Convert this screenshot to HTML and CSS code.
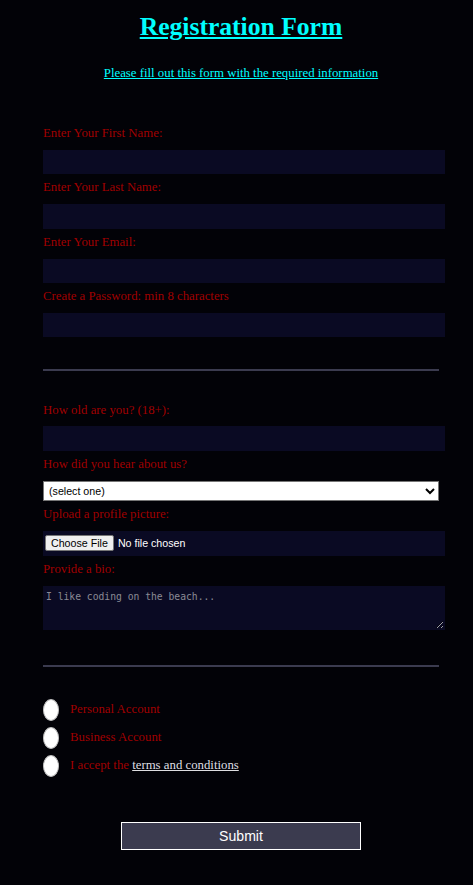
FILE: index.html
```html
<!DOCTYPE html>
<html lang="en">
<head>
<meta charset="utf-8">
<title>Registration Form</title>
<link rel="stylesheet" href="styles.css">
</head>
<body>
<main class="page">
  <h1 class="title">Registration Form</h1>
  <p class="subtitle">Please fill out this form with the required information</p>
  <form class="form" onsubmit="return false">
    <fieldset class="group group-first">
      <label class="field"><span class="field-text">Enter Your First Name:</span><input class="text-input" type="text"></label>
      <label class="field"><span class="field-text">Enter Your Last Name:</span><input class="text-input" type="text"></label>
      <label class="field"><span class="field-text">Enter Your Email:</span><input class="text-input" type="email"></label>
      <label class="field"><span class="field-text">Create a Password: min 8 characters</span><input class="text-input" type="password"></label>
    </fieldset>
    <fieldset class="group group-second">
      <label class="field"><span class="field-text">How old are you? (18+):</span><input class="text-input" type="number"></label>
      <label class="field"><span class="field-text">How did you hear about us?</span><select class="select-input">
        <option>(select one)</option>
        <option>freeCodeCamp News</option>
        <option>freeCodeCamp YouTube Channel</option>
        <option>freeCodeCamp Forum</option>
        <option>Other</option>
      </select></label>
      <label class="field"><span class="field-text">Upload a profile picture:</span><input class="file-input" type="file"></label>
      <label class="field"><span class="field-text">Provide a bio:</span><textarea class="bio-input" placeholder="I like coding on the beach..."></textarea></label>
    </fieldset>
    <fieldset class="group group-third">
      <label class="choice"><input class="round" type="radio" name="account"><span>Personal Account</span></label>
      <label class="choice"><input class="round" type="radio" name="account"><span>Business Account</span></label>
      <label class="choice"><input class="round" type="checkbox"><span>I accept the <a class="terms" href="#">terms and conditions</a></span></label>
    </fieldset>
    <input class="submit" type="submit" value="Submit">
  </form>
</main>
</body>
</html>
```

FILE: styles.css
```css
html, body {
  margin: 0;
  padding: 0;
}

body {
  background-color: #020207;
  font-family: "Liberation Serif", "Times New Roman", serif;
  font-size: 12.8px;
  line-height: 15px;
  min-height: 885px;
}

.page {
  width: 396px;
  margin: 0 0 0 43px;
}

.title {
  margin: 11.8px 0 0;
  font-size: 25.6px;
  line-height: 30px;
  font-weight: bold;
  color: #00ffff;
  text-decoration: underline;
  text-align: center;
}

.subtitle {
  margin: 24.6px 0 0;
  font-size: 12.8px;
  line-height: 15px;
  color: #00ffff;
  text-decoration: underline;
  text-align: center;
}

.form {
  margin: 13.2px 0 0;
  padding: 0 0 20px;
}

.group {
  margin: 0;
  padding: 31.6px 0;
  border: none;
  min-width: 0;
}

.group-first,
.group-second {
  border-bottom: 2.4px solid #3b3b4f;
}

.group-second {
  padding-bottom: 35.6px;
}

.field {
  display: block;
  color: #a00000;
}

.field + .field {
  margin-top: 6.03px;
}

.field-text {
  display: block;
  height: 15px;
}

.text-input,
.file-input,
.bio-input {
  display: block;
  box-sizing: border-box;
  width: 402px;
  margin: 8.8px 0 0;
  background-color: #0a0a23;
  border: 1px solid #0a0a23;
  color: #ffffff;
  outline: none;
}

.text-input {
  height: 24.5px;
  padding: 1px 2px;
}

.select-input {
  display: block;
  box-sizing: border-box;
  width: 396px;
  height: 20px;
  margin: 9.3px 0 0;
  font-family: Arial, "Liberation Sans", sans-serif;
  font-size: 10.67px;
  color: #000000;
  background-color: #ffffff;
  border: 1px solid #767676;
  border-radius: 0;
  padding: 0 1px;
}

.file-input {
  height: 25px;
  padding: 2px 1px;
  font-family: Arial, "Liberation Sans", sans-serif;
  font-size: 10.67px;
  line-height: 19px;
}

.file-input::file-selector-button {
  font-family: Arial, "Liberation Sans", sans-serif;
  font-size: 10.67px;
  height: 16px;
  padding: 0 5px;
  margin: 0 4px 0 0;
  background-color: #efefef;
  border: 1px solid #767676;
  border-radius: 2px;
  color: #000000;
}

.bio-input {
  height: 44px;
  padding: 4px 2px 2px;
  font-family: "DejaVu Sans Mono", "Liberation Mono", monospace;
  font-size: 9.7px;
  line-height: 12px;
  resize: both;
}

.bio-input::placeholder {
  color: #8a8a95;
}

.choice {
  display: block;
  margin: 6.4px 0;
  color: #a00000;
}

.group-third .choice:first-child {
  margin-top: 0;
}

.group-third .choice:last-child {
  margin-bottom: 0;
}

.round {
  -webkit-appearance: none;
  appearance: none;
  display: inline-block;
  vertical-align: middle;
  box-sizing: border-box;
  width: 16px;
  height: 21.7px;
  margin: 0 11px 0 0;
  background-color: #ffffff;
  border: 1px solid #bdbdbd;
  border-radius: 50%;
}

.terms {
  color: #dfdfe2;
  text-decoration: underline;
}

.submit {
  display: block;
  box-sizing: border-box;
  width: 240px;
  height: 28px;
  margin: 13.5px auto 0;
  font-family: Arial, "Liberation Sans", sans-serif;
  font-size: 14.08px;
  color: #ffffff;
  background-color: #3b3b4f;
  border: 1px solid #ffffff;
  border-radius: 0;
  padding: 0;
}
```
